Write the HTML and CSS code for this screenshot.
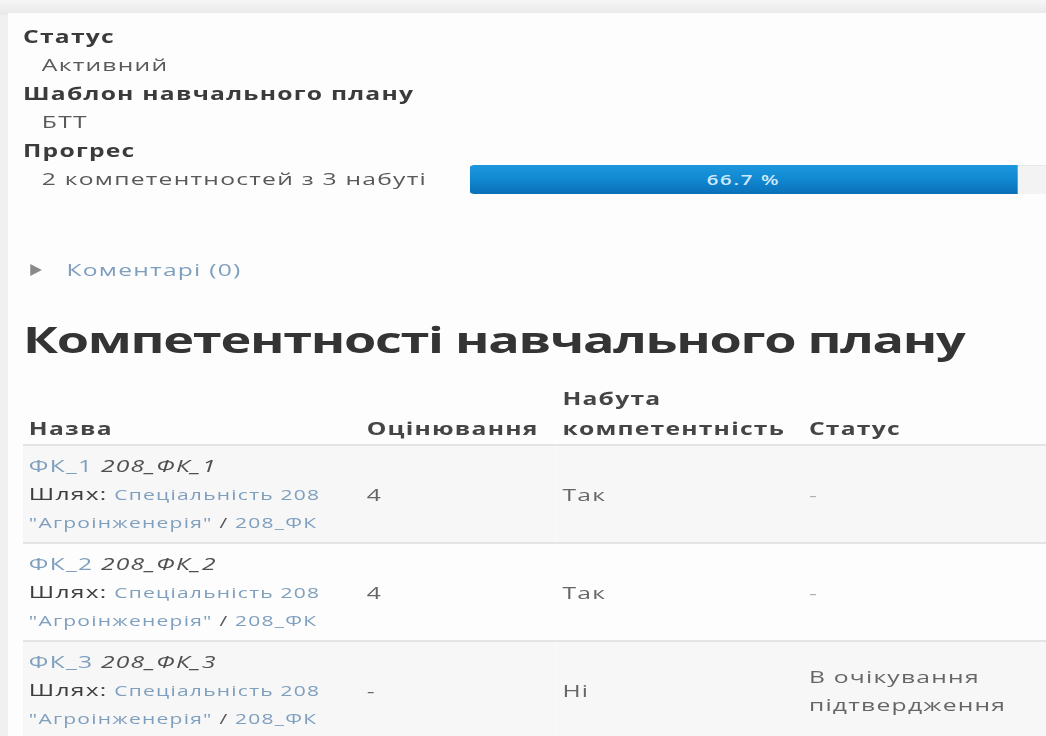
FILE: index.html
```html
<!DOCTYPE html>
<html lang="uk">
<head>
<meta charset="utf-8">
<title>Навчальний план</title>
<link rel="stylesheet" href="styles.css">
</head>
<body>
<div class="topbar"></div>
<main class="panel">
  <div class="content">
    <dl class="plan-info">
      <dt>Статус</dt>
      <dd>Активний</dd>
      <dt>Шаблон навчального плану</dt>
      <dd>БТТ</dd>
      <dt>Прогрес</dt>
      <dd class="progress-row">
        <span class="progress-text">2 компетентностей з 3 набуті</span>
        <div class="progress">
          <div class="progress-bar" style="width: 66.7%">66.7 %</div>
        </div>
      </dd>
    </dl>

    <div class="comments">
      <span class="caret"></span>
      <a href="#" class="link">Коментарі (0)</a>
    </div>

    <h2 class="section-title">Компетентності навчального плану</h2>

    <table class="comp-table">
      <colgroup>
        <col class="col-name">
        <col class="col-rating">
        <col class="col-prof">
        <col>
      </colgroup>
      <thead>
        <tr>
          <th>Назва</th>
          <th>Оцінювання</th>
          <th>Набута<br>компетентність</th>
          <th>Статус</th>
        </tr>
      </thead>
      <tbody>
        <tr class="odd">
          <td>
            <div class="comp-title"><a href="#" class="link">ФК_1</a> <em>208_ФК_1</em></div>
            <div class="comp-path"><span class="path-label">Шлях:</span> <a href="#" class="link">Спеціальність 208</a></div>
            <div class="comp-path"><a href="#" class="link">"Агроінженерія"</a> / <a href="#" class="link">208_ФК</a></div>
          </td>
          <td class="val">4</td>
          <td class="val">Так</td>
          <td class="val muted">-</td>
        </tr>
        <tr>
          <td>
            <div class="comp-title"><a href="#" class="link">ФК_2</a> <em>208_ФК_2</em></div>
            <div class="comp-path"><span class="path-label">Шлях:</span> <a href="#" class="link">Спеціальність 208</a></div>
            <div class="comp-path"><a href="#" class="link">"Агроінженерія"</a> / <a href="#" class="link">208_ФК</a></div>
          </td>
          <td class="val">4</td>
          <td class="val">Так</td>
          <td class="val muted">-</td>
        </tr>
        <tr class="odd">
          <td>
            <div class="comp-title"><a href="#" class="link">ФК_3</a> <em>208_ФК_3</em></div>
            <div class="comp-path"><span class="path-label">Шлях:</span> <a href="#" class="link">Спеціальність 208</a></div>
            <div class="comp-path"><a href="#" class="link">"Агроінженерія"</a> / <a href="#" class="link">208_ФК</a></div>
          </td>
          <td class="val">-</td>
          <td class="val">Ні</td>
          <td class="val"><span class="status-text">В очікування підтвердження</span></td>
        </tr>
      </tbody>
    </table>
  </div>
</main>
</body>
</html>
```

FILE: styles.css
```css
html, body {
  margin: 0;
  padding: 0;
}

body {
  background: #f0f0f0;
  font-family: "Open Sans", "Noto Sans", sans-serif;
  font-size: 17px;
  color: #555;
  overflow: hidden;
  width: 1046px;
  height: 736px;
}

.topbar {
  height: 13px;
  background: linear-gradient(#f6f6f6, #eaeaea);
  box-shadow: 0 1px 2px rgba(0, 0, 0, 0.06);
}

.panel {
  margin-left: 8px;
  width: 1300px;
  min-height: 723px;
  background: #fdfdfd;
  padding: 10px 0 0 15px;
  box-sizing: border-box;
}

/* the page is laid out wide: glyphs and columns are stretched horizontally */
.content {
  width: 760px;
  transform: scaleX(1.45);
  transform-origin: 0 0;
  letter-spacing: 0.85px;
}

.link {
  color: #7f9fbe;
  text-decoration: none;
}

/* plan summary */
.plan-info {
  margin: 0;
  line-height: 28.4px;
}

.plan-info dt {
  font-weight: 700;
  color: #3b3b3b;
}

.plan-info dd {
  margin: 0 0 0 13px;
  color: #595959;
}

.progress-row {
  display: flex;
  align-items: center;
}

.progress-text {
  flex: 0 0 294.5px;
}

.progress {
  flex: 0 0 568px;
  height: 29px;
  background: #f3f3f3;
  border-radius: 3px;
  box-shadow: inset 0 1px 1px rgba(0, 0, 0, 0.05);
  overflow: hidden;
}

.progress-bar {
  height: 100%;
  background: linear-gradient(#1d97dd, #118ad2 45%, #0a70b8);
  color: #cfe9fb;
  font-size: 14px;
  font-weight: 600;
  letter-spacing: 1.2px;
  text-align: center;
  line-height: 29px;
  border-radius: 3px 0 0 3px;
}

/* comments toggle */
.comments {
  margin-top: 62px;
  display: flex;
  align-items: center;
  gap: 17px;
  padding-left: 5px;
  line-height: 28px;
  font-size: 17px;
}

.caret {
  width: 0;
  height: 0;
  border-top: 6px solid transparent;
  border-bottom: 6px solid transparent;
  border-left: 8px solid #8a8a8a;
}

/* competencies table */
.section-title {
  margin: 32px 0 0;
  font-size: 36px;
  font-weight: 700;
  color: #343434;
  line-height: 48px;
  letter-spacing: -0.9px;
}

.comp-table {
  margin-top: 20px;
  border-collapse: collapse;
  table-layout: fixed;
  width: 760px;
}

.col-name { width: 233px; }
.col-rating { width: 135px; }
.col-prof { width: 170px; }

.comp-table th {
  text-align: left;
  vertical-align: bottom;
  font-weight: 700;
  color: #454545;
  line-height: 30px;
  padding: 0 4px;
  border-bottom: 2px solid #e4e4e4;
}

.comp-table td {
  vertical-align: middle;
  padding: 6px 4px 5px;
  border-bottom: 2px solid #e4e4e4;
  line-height: 28px;
}

.comp-table tr.odd td {
  background: #f7f7f7;
}

.status-text {
  display: block;
  max-width: 145px;
}

.comp-title {
  font-size: 17px;
}

.comp-title em {
  color: #505050;
}

.comp-path {
  font-size: 14.5px;
}

.path-label {
  font-size: 17px;
  color: #3d3d3d;
}

.val {
  color: #666;
}

.muted {
  color: #b0b0b0;
}
```
